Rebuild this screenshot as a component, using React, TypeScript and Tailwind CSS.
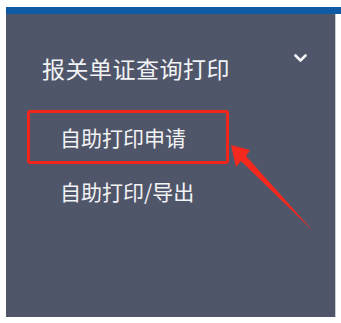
export default function App() {
  return (
    <div className="relative h-[323px] w-[341px] overflow-hidden bg-white pl-[6px] pt-[7px] font-['Noto_Sans_CJK_SC','Noto_Sans',sans-serif]">
      {/* top blue strip */}
      <div className="h-[7px] bg-[#0e5aa5]" />

      {/* side menu panel */}
      <div className="flex h-[303px] w-[330px] flex-col border-r border-[#c9ccd3] bg-[#50566a] pt-[30px] text-[#f2f3f5]">
        <div className="flex h-[48px] items-center justify-between pl-[36px] pr-[28px]">
          <span className="text-[23px] leading-none tracking-[0.5px]">报关单证查询打印</span>
          <svg className="mb-[20px] h-[9px] w-[13px]" viewBox="0 0 13 9" fill="none">
            <path d="M1.5 1.5 L6.5 6.5 L11.5 1.5" stroke="#f2f3f5" strokeWidth="2.6" strokeLinecap="round" strokeLinejoin="round" />
          </svg>
        </div>

        <div className="mt-[18px] flex flex-col">
          <div className="flex h-[54px] items-center pl-[54px] text-[21px] leading-none">自助打印申请</div>
          <div className="flex h-[54px] items-center pl-[54px] text-[21px] leading-none">自助打印/导出</div>
        </div>
      </div>

      {/* annotation: red box */}
      <div className="absolute left-[27px] top-[110px] h-[54px] w-[202px] rounded-[3px] border-[3px] border-[#f0261c]" />

      {/* annotation: red arrow */}
      <svg className="absolute left-0 top-0" width="341" height="323" viewBox="0 0 341 323">
        <polygon
          points="231,145 250,150 246,156 313,231 241,161 236,167"
          fill="#f5281d"
        />
      </svg>
    </div>
  )
}
